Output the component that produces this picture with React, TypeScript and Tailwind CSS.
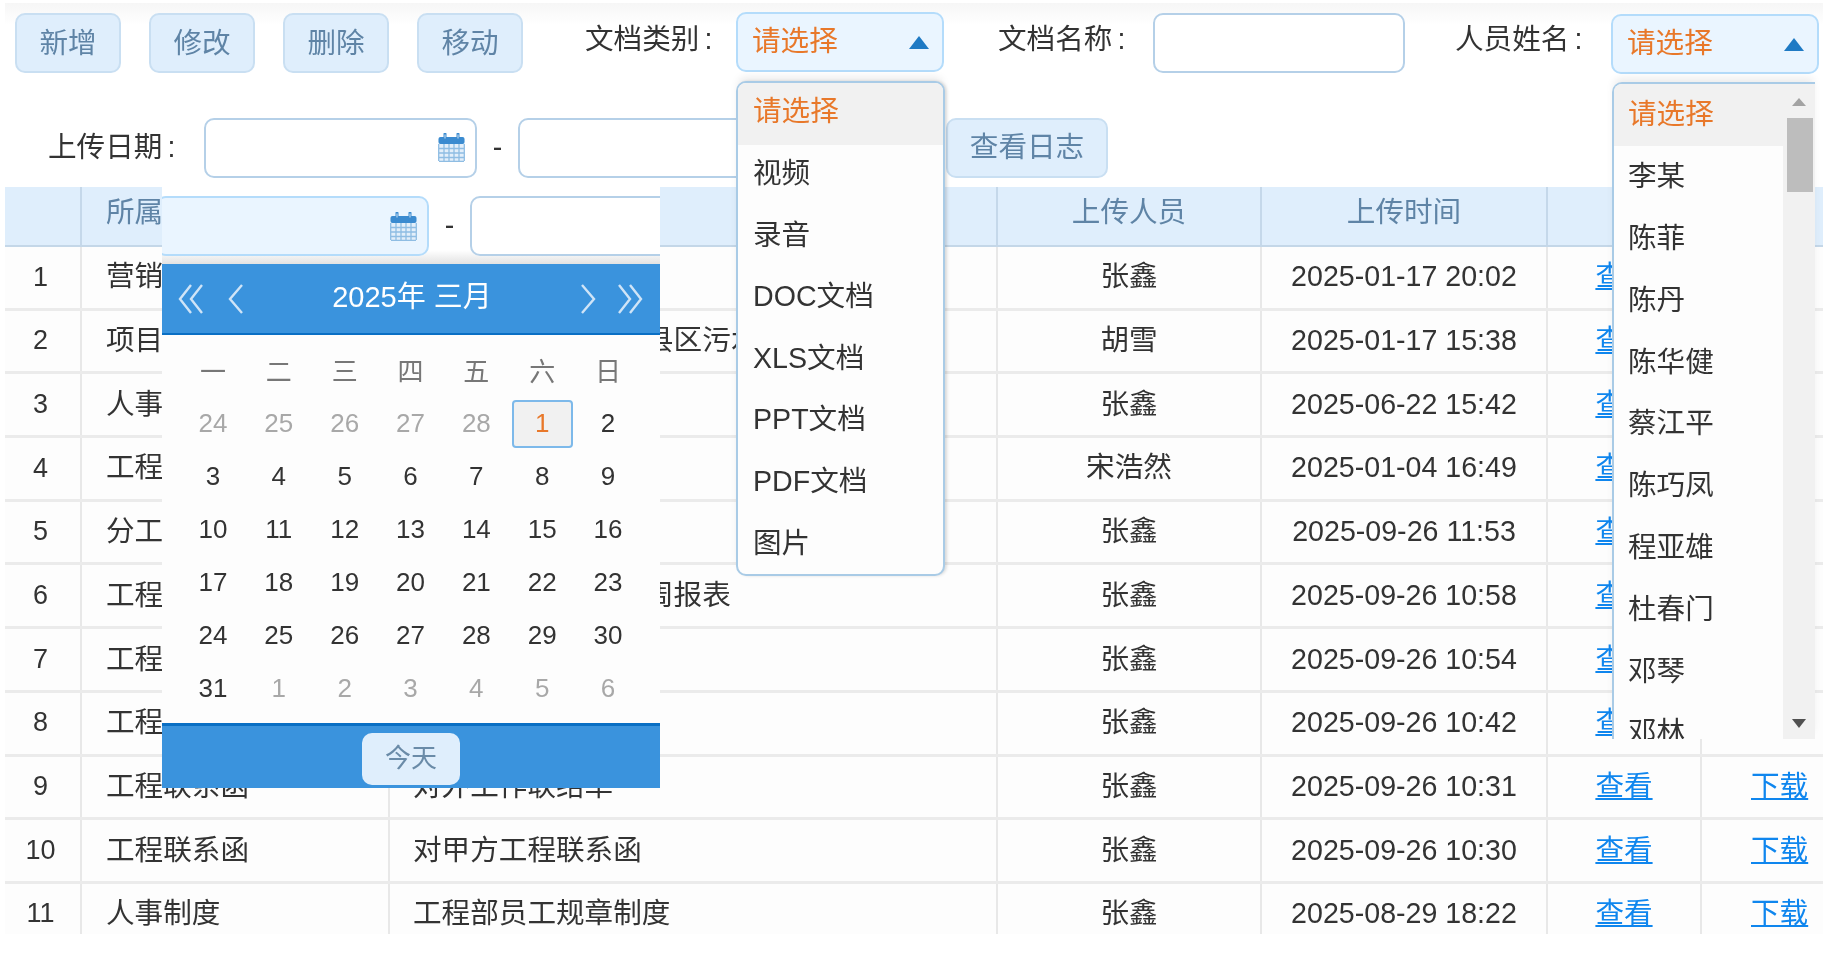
const rows = [
  ["营销管理制度", "营销部门工作计划", "张鑫", "2025-01-17 20:02"],
  ["项目管理文件", "25年度工程项目部县区污水处理项目施工组织设计方案及相关配套资料文件汇总目录清单", "胡雪", "2025-01-17 15:38"],
  ["人事制度", "考勤管理制度", "张鑫", "2025-06-22 15:42"],
  ["工程联系函", "对外工程联系函", "宋浩然", "2025-01-04 16:49"],
  ["分工调整", "部门分工调整", "张鑫", "2025-09-26 11:53"],
  ["工程报表", "25年度工程项目部周报表", "张鑫", "2025-09-26 10:58"],
  ["工程联系函", "对外工程联系函", "张鑫", "2025-09-26 10:54"],
  ["工程联系函", "对外工程联系函", "张鑫", "2025-09-26 10:42"],
  ["工程联系函", "对外工作联络单", "张鑫", "2025-09-26 10:31"],
  ["工程联系函", "对甲方工程联系函", "张鑫", "2025-09-26 10:30"],
  ["人事制度", "工程部员工规章制度", "张鑫", "2025-08-29 18:22"],
];

const docTypes = ["请选择", "视频", "录音", "DOC文档", "XLS文档", "PPT文档", "PDF文档", "图片"];
const people = ["请选择", "李某", "陈菲", "陈丹", "陈华健", "蔡江平", "陈巧凤", "程亚雄", "杜春门", "邓琴", "邓林"];
const weekDays = ["一", "二", "三", "四", "五", "六", "日"];
const days = [
  24, 25, 26, 27, 28, 1, 2, 3, 4, 5, 6, 7, 8, 9, 10, 11, 12, 13, 14, 15, 16, 17, 18, 19, 20, 21, 22, 23, 24, 25, 26, 27,
  28, 29, 30, 31, 1, 2, 3, 4, 5, 6,
];

function CalendarIcon() {
  return (
    <svg viewBox="0 0 27 29" className="h-[29px] w-[27px] shrink-0">
      <rect x="0.5" y="4" width="26" height="24.5" rx="2" fill="#e3effa" />
      <rect x="0.5" y="4" width="26" height="7" rx="2" fill="#3b8bd0" />
      <path d="M7 1v6M20 1v6" stroke="#3b8bd0" strokeWidth="3" strokeLinecap="round" />
      <path d="M7 1.5v4M20 1.5v4" stroke="#cfe3f5" strokeWidth="1" />
      <path
        d="M1 15.5h25M1 20h25M1 24.5h25M6 11v17M11 11v17M16 11v17M21 11v17M0.7 11v17M26.3 11v17M1 28.3h25"
        stroke="#8fbde3"
        strokeWidth="1.3"
      />
    </svg>
  );
}

function Arrow() {
  return (
    <svg viewBox="0 0 20 13" className="h-[13px] w-[20px]">
      <path d="M10 0l10 13H0z" fill="#1f7ac4" />
    </svg>
  );
}

function Select({ className }: { className: string }) {
  return (
    <div
      className={`flex h-[60px] w-[208px] shrink-0 items-center justify-between rounded-[10px] border-2 border-[#b4dcfb] bg-[#eaf5ff] pl-[14px] pr-[13px] text-[#e8782a] ${className}`}
    >
      <span className="-mt-[2px]">请选择</span>
      <Arrow />
    </div>
  );
}

function DateInput({ className }: { className: string }) {
  return (
    <div
      className={`flex h-[60px] w-[273px] shrink-0 items-center justify-end rounded-[10px] border-2 pr-[10px] ${className}`}
    >
      <CalendarIcon />
    </div>
  );
}

function Btn({ label, className = "" }: { label: string; className?: string }) {
  return (
    <button
      type="button"
      className={`h-[60px] w-[106px] shrink-0 rounded-[10px] border-2 border-[#c9dff2] bg-[#dfeefc] text-[#5f84a6] ${className}`}
    >
      {label}
    </button>
  );
}

function Label({ text, className }: { text: string; className: string }) {
  return (
    <span className={`shrink-0 ${className}`}>
      {text}
      <span className="ml-[5px]">:</span>
    </span>
  );
}

function Chevrons({ double, flip }: { double?: boolean; flip?: boolean }) {
  return (
    <svg viewBox="0 0 26 30" className={`h-[30px] w-[26px] ${flip ? "-scale-x-100" : ""}`}>
      <g fill="none" stroke="#cfe4f7" strokeWidth="2.4">
        {double ? (
          <>
            <path d="M13 1L2 15l11 14" />
            <path d="M24 1L13 15l11 14" />
          </>
        ) : (
          <path d="M20 1L8 15l12 14" />
        )}
      </g>
    </svg>
  );
}

function DatePopup() {
  return (
    <div className="absolute left-[162px] top-[187px] z-10 flex w-[498px] flex-col overflow-hidden bg-[#fdfdfd]">
      <div className="flex h-[77px] items-start bg-[linear-gradient(#fff_82%,#e2e2e2)] pt-[9px]">
        <DateInput className="-ml-[6px] border-[#b4dcfb] bg-[#eaf5ff]" />
        <span className="w-[41px] shrink-0 pt-[8px] text-center text-[#333]">-</span>
        <div className="h-[60px] w-[273px] shrink-0 rounded-[10px] border-2 border-[#b5d0e8] bg-white" />
      </div>
      <div className="flex h-[71px] items-center justify-between border-b-2 border-[#0a6fc4] bg-[#3a93dd] pl-[16px] pr-[17px] text-[29px] text-white">
        <div className="flex items-center gap-[18px]">
          <Chevrons double />
          <Chevrons />
        </div>
        <span className="-mt-[1px]">2025年 三月</span>
        <div className="flex items-center gap-[15px]">
          <Chevrons flip />
          <Chevrons double flip />
        </div>
      </div>
      <div className="grid grid-cols-7 pb-[8px] pl-[18px] pr-[19px] pt-[10px] text-[26px]">
        {weekDays.map((d) => (
          <div key={d} className="flex h-[52px] items-center justify-center pt-[2px] text-[#777]">
            {d}
          </div>
        ))}
        {days.map((d, i) => {
          const muted = i < 5 || i > 35;
          const current = i === 5;
          return (
            <div key={i} className="flex h-[53px] items-center justify-center">
              {current ? (
                <span className="flex h-[48px] w-[61px] items-center justify-center rounded-[4px] border-2 border-[#7db9ea] bg-[#f1f1f1] text-[#e8782a]">
                  {d}
                </span>
              ) : (
                <span className={muted ? "text-[#a8a8a8]" : "text-[#333]"}>{d}</span>
              )}
            </div>
          );
        })}
      </div>
      <div className="flex h-[65px] justify-center border-t-[3px] border-[#0a6fc4] bg-[#3a93dd] pt-[7px]">
        <button
          type="button"
          className="h-[52px] w-[98px] rounded-[10px] bg-[#dfeefc] pb-[2px] text-[26px] text-[#6a8ba8]"
        >
          今天
        </button>
      </div>
    </div>
  );
}

export default function App() {
  return (
    <div className="relative h-[963px] w-[1833px] overflow-hidden bg-white font-['Liberation_Sans','Noto_Sans_CJK_SC',sans-serif] text-[28.6px] text-[#333] blur-[0.35px]">
      <div className="ml-[5px] mr-[10px] mt-[3px] flex h-[931px] flex-col overflow-hidden bg-[#fdfdfd]">
        {/* filter bar */}
        <div className="flex flex-col bg-[linear-gradient(#f6f6f6,#fff_22px)] pt-[10px]">
          <div className="flex h-[60px] items-start pl-[10px]">
            <div className="flex gap-[28px]">
              <Btn label="新增" />
              <Btn label="修改" />
              <Btn label="删除" />
              <Btn label="移动" />
            </div>
            <Label text="文档类别" className="ml-[62px] w-[151px] pt-[5px]" />
            <Select className="-mt-[1px]" />
            <Label text="文档名称" className="ml-[54px] w-[155px] pt-[5px]" />
            <div className="h-[60px] w-[252px] shrink-0 rounded-[10px] border-2 border-[#b5d0e8] bg-white" />
            <Label text="人员姓名" className="ml-[50px] w-[156px] pt-[5px]" />
            <Select className="mt-[1px]" />
          </div>
          <div className="mb-[9px] mt-[44px] flex h-[61px] items-center pl-[43px]">
            <Label text="上传日期" className="w-[156px]" />
            <DateInput className="border-[#b5d0e8] bg-white" />
            <span className="w-[41px] shrink-0 text-center">-</span>
            <div className="h-[60px] w-[273px] shrink-0 rounded-[10px] border-2 border-[#b5d0e8] bg-white" />
            <Btn label="查看日志" className="ml-[155px] w-[162px]" />
          </div>
        </div>

        {/* table */}
        <div className="flex h-[60px] shrink-0 border-b-2 border-[#c4d7e8] bg-[#dfeefc] pb-[8px] text-[#5f84a6]">
          <div className="-mb-[8px] w-[77px] shrink-0 border-r-2 border-[#c5d8ea]" />
          <div className="-mb-[8px] flex w-[308px] shrink-0 items-center border-r-2 border-[#c5d8ea] pb-[8px] pl-[24px]">所属分类</div>
          <div className="-mb-[8px] flex w-[608px] shrink-0 items-center border-r-2 border-[#c5d8ea] pb-[8px] pl-[23px]">文档名称</div>
          <div className="-mb-[8px] flex w-[264px] shrink-0 items-center justify-center border-r-2 border-[#c5d8ea] pb-[8px]">上传人员</div>
          <div className="-mb-[8px] flex w-[286px] shrink-0 items-center justify-center border-r-2 border-[#c5d8ea] pb-[8px]">上传时间</div>
          <div className="flex flex-1 items-center justify-center">操作</div>
        </div>
        {rows.map((r, i) => (
          <div key={i} className="flex h-[63.7px] shrink-0 border-b-[3px] border-[#ebebeb]">
            <div className="flex w-[77px] shrink-0 items-center justify-center border-r-2 border-[#e8e8e8] pb-[1px] pr-[4px] text-[27px]">
              {i + 1}
            </div>
            <div className="flex w-[308px] shrink-0 items-center border-r-2 border-[#e8e8e8] pb-[1px] pl-[24px]">
              {r[0]}
            </div>
            <div className="flex w-[608px] shrink-0 items-center border-r-2 border-[#e8e8e8] pb-[1px] pl-[23px] pr-[38px]">
              <span className="truncate">{r[1]}</span>
            </div>
            <div className="flex w-[264px] shrink-0 items-center justify-center border-r-2 border-[#e8e8e8] pb-[1px]">
              {r[2]}
            </div>
            <div className="flex w-[286px] shrink-0 items-center justify-center border-r-2 border-[#e8e8e8] pb-[1px]">
              {r[3]}
            </div>
            <div className="flex w-[154px] shrink-0 items-center justify-center border-r-2 border-[#e8e8e8] pb-[1px]">
              <a className="text-[#0f86ee] underline">查看</a>
            </div>
            <div className="flex flex-1 items-center pb-[1px] pl-[49px]">
              <a className="text-[#0f86ee] underline">下载</a>
            </div>
          </div>
        ))}
      </div>

      <DatePopup />

      {/* doc type dropdown */}
      <div className="absolute left-[736px] top-[81px] z-10 flex h-[495px] w-[209px] flex-col overflow-hidden rounded-[10px] border-2 border-[#a9cbe6] bg-[#fdfdfd] shadow-[0_-6px_8px_-2px_rgba(0,0,0,0.08),2px_0_3px_rgba(0,0,0,0.12)]">
        {docTypes.map((t, i) => (
          <div
            key={t}
            className={`flex h-[61.6px] shrink-0 items-center pb-[4px] pl-[15px] ${i === 0 ? "bg-[#f1f1f1] text-[#e8782a]" : ""}`}
          >
            {t}
          </div>
        ))}
      </div>

      {/* person dropdown */}
      <div className="absolute left-[1612px] top-[82px] z-10 flex h-[657px] w-[203px] overflow-hidden rounded-tl-[10px] border-l-2 border-t-2 border-[#a9cbe6] bg-[#fdfdfd] shadow-[0_-6px_8px_-2px_rgba(0,0,0,0.08)]">
        <div className="flex flex-1 flex-col">
          {people.map((p, i) => (
            <div
              key={p}
              className={`flex h-[61.8px] shrink-0 items-center pl-[14px] ${i === 0 ? "bg-[#f1f1f1] text-[#e8782a]" : ""}`}
            >
              {p}
            </div>
          ))}
        </div>
        <div className="flex w-[32px] shrink-0 flex-col items-center bg-[#f1f1f1]">
          <svg viewBox="0 0 14 8" className="mt-[14px] h-[8px] w-[14px]">
            <path d="M7 0l7 8H0z" fill="#a3a3a3" />
          </svg>
          <div className="ml-[2px] mt-[12px] h-[74px] w-[26px] bg-[#bdbdbd]" />
          <svg viewBox="0 0 14 9" className="mb-[11px] mt-auto h-[9px] w-[14px]">
            <path d="M0 0h14L7 9z" fill="#505050" />
          </svg>
        </div>
      </div>
    </div>
  );
}
